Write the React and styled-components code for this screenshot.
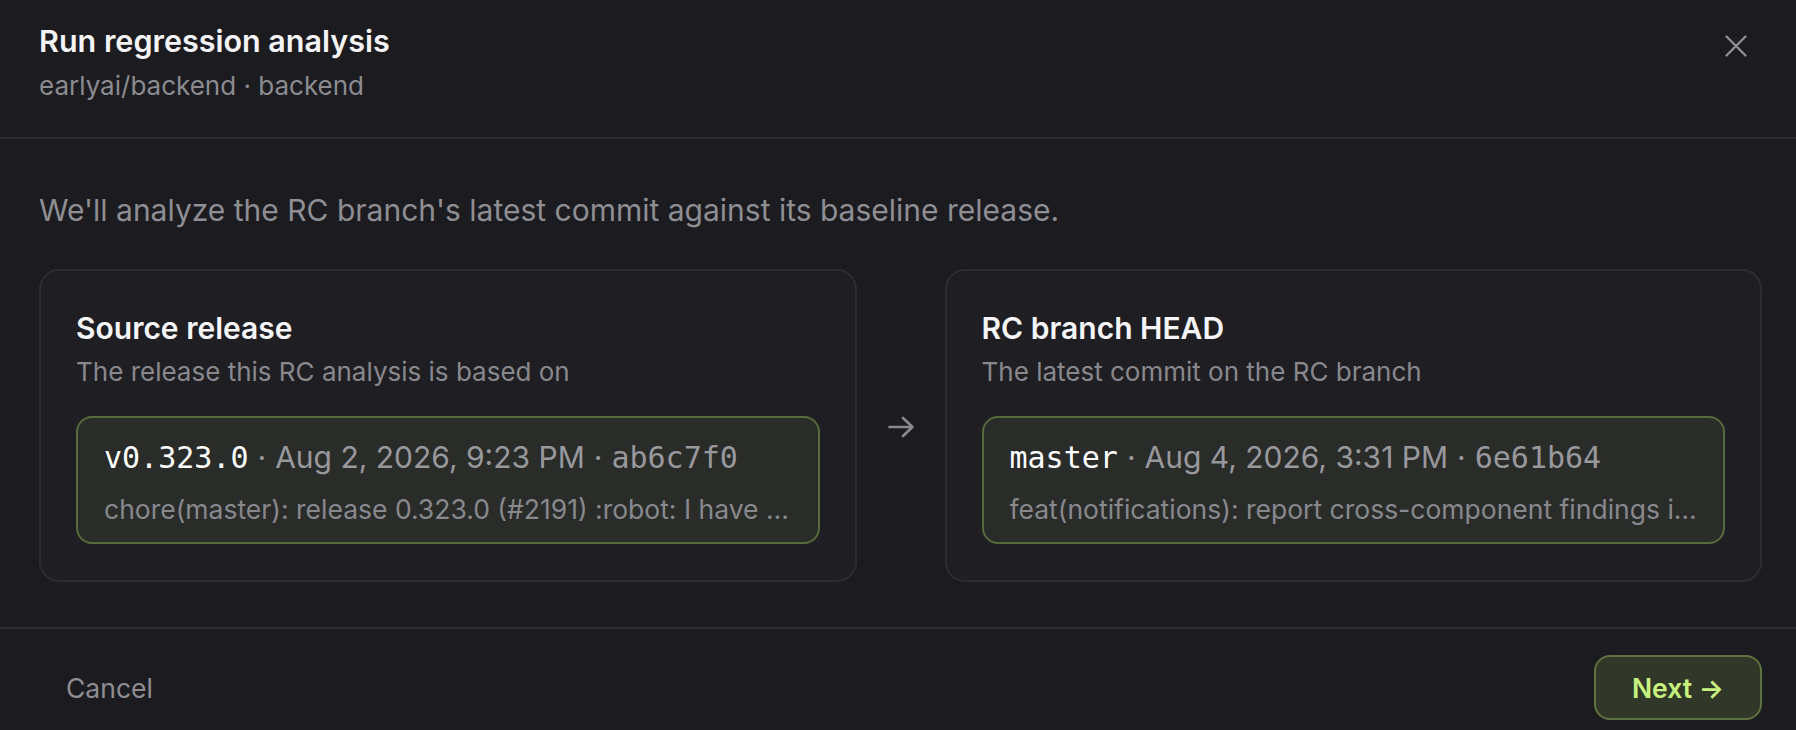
import React from "react";
import styled, { createGlobalStyle } from "styled-components";

const GlobalStyle = createGlobalStyle`
  html, body {
    margin: 0;
    padding: 0;
    background: #1c1c20;
  }
  body {
    font-family: Inter, "Noto Sans", "Liberation Sans", sans-serif;
    -webkit-font-smoothing: antialiased;
  }
  * { box-sizing: border-box; }
`;

const Dialog = styled.div`
  display: flex;
  flex-direction: column;
  width: 100%;
  min-height: 730px;
  background: #1c1c20;
`;

const Header = styled.header`
  display: flex;
  justify-content: space-between;
  align-items: flex-start;
  padding: 21px 34px 33px 39px;
  border-bottom: 2px solid #2d2d32;
`;

const TitleBlock = styled.div`
  display: flex;
  flex-direction: column;
`;

const Title = styled.h1`
  margin: 0;
  font-size: 30.5px;
  line-height: 40px;
  font-weight: 600;
  color: #f4f4f6;
`;

const Subtitle = styled.div`
  margin-top: 7px;
  font-size: 26px;
  line-height: 36px;
  color: #8b8b90;
`;

const CloseButton = styled.button`
  display: flex;
  align-items: center;
  justify-content: center;
  width: 40px;
  height: 40px;
  margin: 5px 6px 0 0;
  padding: 0;
  border: none;
  background: transparent;
  color: #8e8e93;
  cursor: pointer;
`;

const Body = styled.main`
  display: flex;
  flex-direction: column;
  padding: 49px 34px 45px 39px;
  border-bottom: 2px solid #2d2d32;
`;

const Description = styled.p`
  margin: 0;
  font-size: 30px;
  line-height: 45px;
  color: #8e8e93;
`;

const Compare = styled.div`
  display: grid;
  grid-template-columns: 1fr auto 1fr;
  align-items: center;
  column-gap: 30px;
  margin-top: 36px;
`;

const Card = styled.section`
  display: flex;
  flex-direction: column;
  min-width: 0;
  padding: 38px 35px 36px;
  background: #1f1f23;
  border: 2px solid #2c2c31;
  border-radius: 20px;
`;

const CardTitle = styled.h2`
  margin: 0;
  font-size: 30px;
  line-height: 38px;
  font-weight: 600;
  color: #f6f6f8;
`;

const CardSubtitle = styled.div`
  margin-top: 8px;
  font-size: 26px;
  line-height: 34px;
  color: #88888d;
`;

const RefBox = styled.div`
  display: flex;
  flex-direction: column;
  min-width: 0;
  margin-top: 27px;
  padding: 19px 26px 16px;
  background: #2a2c2a;
  border: 2px solid #586a3b;
  border-radius: 16px;
`;

const RefLine = styled.div`
  font-size: 30px;
  line-height: 40px;
  color: #98989d;
  white-space: nowrap;
`;

const Mono = styled.span`
  font-family: "DejaVu Sans Mono", "Liberation Mono", monospace;
  font-size: 30px;
  color: ${(p) => (p.$strong ? "#ffffff" : "#98989d")};
  font-weight: 400;
`;

const Sep = styled.span`
  margin: 0 9px;
  color: #98989d;
`;

const CommitMsg = styled.div`
  margin-top: 14px;
  font-size: 26.5px;
  line-height: 34px;
  color: #88888d;
  white-space: nowrap;
  overflow: hidden;
  text-overflow: ellipsis;
`;

const Arrow = styled.div`
  display: flex;
  align-items: center;
  justify-content: center;
  color: #8a8a8f;
  margin-top: 2px;
`;

const Footer = styled.footer`
  display: flex;
  justify-content: space-between;
  align-items: center;
  padding: 26px 34px 11px 39px;
`;

const GhostButton = styled.button`
  height: 65px;
  padding: 0 27px;
  border: none;
  background: transparent;
  font-family: inherit;
  font-size: 26.5px;
  color: #8e8e93;
  cursor: pointer;
`;

const PrimaryButton = styled.button`
  height: 65px;
  padding: 0 36px;
  border: 2px solid #5e7140;
  border-radius: 16px;
  background: #323829;
  font-family: inherit;
  font-size: 26.5px;
  font-weight: 600;
  color: #c8f27e;
  cursor: pointer;
`;

function RefCard({ title, subtitle, name, date, sha, message }) {
  return (
    <Card>
      <CardTitle>{title}</CardTitle>
      <CardSubtitle>{subtitle}</CardSubtitle>
      <RefBox>
        <RefLine>
          <Mono $strong>{name}</Mono>
          <Sep>·</Sep>
          {date}
          <Sep>·</Sep>
          <Mono>{sha}</Mono>
        </RefLine>
        <CommitMsg>{message}</CommitMsg>
      </RefBox>
    </Card>
  );
}

export default function App() {
  return (
    <>
      <GlobalStyle />
      <Dialog>
        <Header>
          <TitleBlock>
            <Title>Run regression analysis</Title>
            <Subtitle>earlyai/backend · backend</Subtitle>
          </TitleBlock>
          <CloseButton aria-label="Close">
            <svg width="22" height="22" viewBox="0 0 22 22" fill="none" stroke="currentColor" strokeWidth="2.4" strokeLinecap="round">
              <path d="M1.5 1.5L20.5 20.5M20.5 1.5L1.5 20.5" />
            </svg>
          </CloseButton>
        </Header>
        <Body>
          <Description>We'll analyze the RC branch's latest commit against its baseline release.</Description>
          <Compare>
            <RefCard
              title="Source release"
              subtitle="The release this RC analysis is based on"
              name="v0.323.0"
              date="Aug 2, 2026, 9:23 PM"
              sha="ab6c7f0"
              message="chore(master): release 0.323.0 (#2191) :robot: I have created a release *beep* *boop*"
            />
            <Arrow>
              <svg width="28" height="24" viewBox="0 0 28 24" fill="none" stroke="currentColor" strokeWidth="2.6" strokeLinecap="round" strokeLinejoin="round">
                <path d="M2.5 12H25.5M16 3L25.5 12L16 21" />
              </svg>
            </Arrow>
            <RefCard
              title="RC branch HEAD"
              subtitle="The latest commit on the RC branch"
              name="master"
              date="Aug 4, 2026, 3:31 PM"
              sha="6e61b64"
              message="feat(notifications): report cross-component findings in release notifications"
            />
          </Compare>
        </Body>
        <Footer>
          <GhostButton>Cancel</GhostButton>
          <PrimaryButton>Next →</PrimaryButton>
        </Footer>
      </Dialog>
    </>
  );
}
